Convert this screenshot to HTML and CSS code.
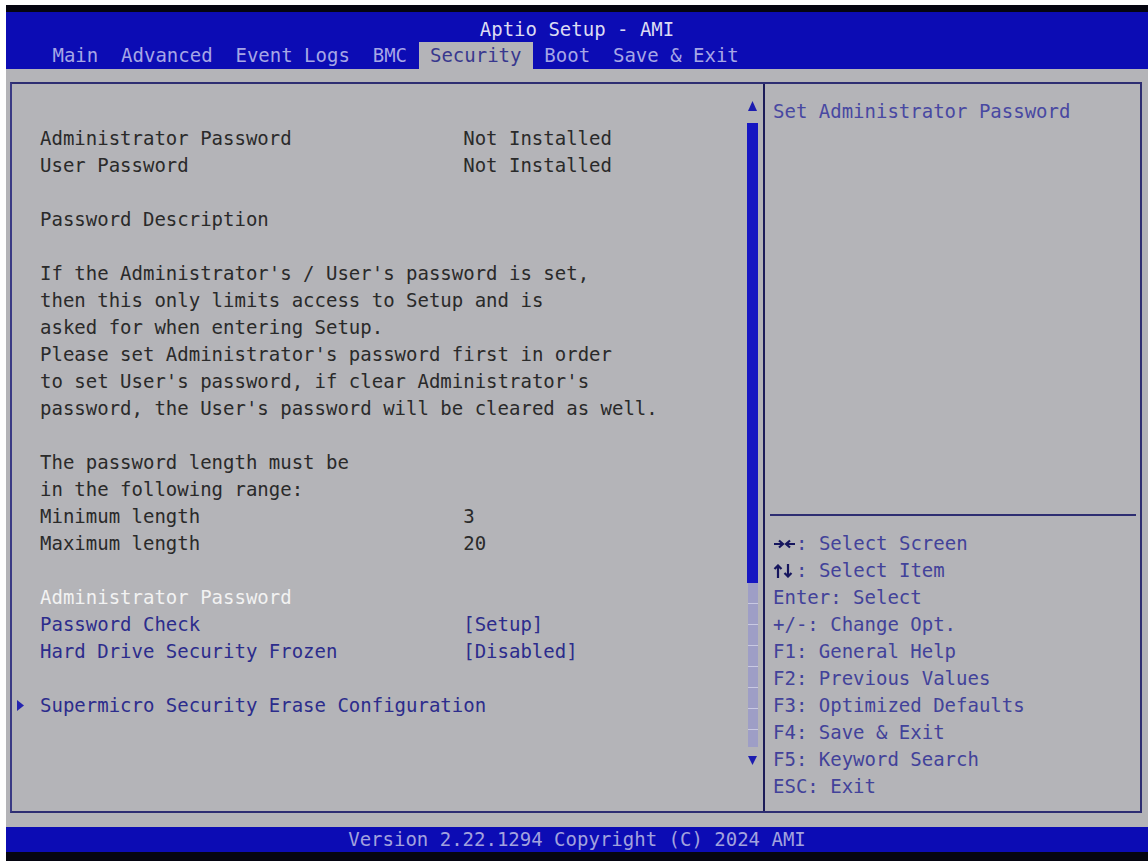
FILE: index.html
```html
<!DOCTYPE html>
<html lang="en">
<head>
    <meta charset="UTF-8">
    <meta name="viewport" content="width=device-width, initial-scale=1.0">
    <title>Aptio Setup - AMI</title>
    <link rel="stylesheet" href="styles.css">
</head>
<body>
    <div class="screen">
        <div class="bezel"></div>

        <header class="titlebar">
            <div class="title">Aptio Setup - AMI</div>
            <nav class="tabs">
                <span class="tab">Main</span>
                <span class="tab">Advanced</span>
                <span class="tab">Event Logs</span>
                <span class="tab">BMC</span>
                <span class="tab active">Security</span>
                <span class="tab">Boot</span>
                <span class="tab">Save &amp; Exit</span>
            </nav>
        </header>

        <main class="workspace">
            <div class="frame">
                <section class="setup-pane">
                    <div class="items">
                        <div class="row">&nbsp;</div>
                        <div class="row field"><span>Administrator Password</span><span>Not Installed</span></div>
                        <div class="row field"><span>User Password</span><span>Not Installed</span></div>
                        <div class="row">&nbsp;</div>
                        <div class="row">Password Description</div>
                        <div class="row">&nbsp;</div>
                        <div class="row">If the Administrator's / User's password is set,</div>
                        <div class="row">then this only limits access to Setup and is</div>
                        <div class="row">asked for when entering Setup.</div>
                        <div class="row">Please set Administrator's password first in order</div>
                        <div class="row">to set User's password, if clear Administrator's</div>
                        <div class="row">password, the User's password will be cleared as well.</div>
                        <div class="row">&nbsp;</div>
                        <div class="row">The password length must be</div>
                        <div class="row">in the following range:</div>
                        <div class="row field"><span>Minimum length</span><span>3</span></div>
                        <div class="row field"><span>Maximum length</span><span>20</span></div>
                        <div class="row">&nbsp;</div>
                        <div class="row option selected">Administrator Password</div>
                        <div class="row field option"><span>Password Check</span><span>[Setup]</span></div>
                        <div class="row field option"><span>Hard Drive Security Frozen</span><span>[Disabled]</span></div>
                        <div class="row">&nbsp;</div>
                        <div class="row option submenu"><svg class="pointer" width="7" height="11" viewBox="0 0 7 11"><path d="M0 0 L7 5.5 L0 11 Z" fill="#2424b0"/></svg>Supermicro Security Erase Configuration</div>
                    </div>

                    <div class="scrollbar">
                        <svg class="arrow" width="11" height="12" viewBox="0 0 11 12"><path d="M5.5 1 L10 11 L1 11 Z" fill="#1c1cb0"/></svg>
                        <div class="thumb"></div>
                        <div class="track"></div>
                        <svg class="arrow down" width="11" height="11" viewBox="0 0 11 11"><path d="M1 1 L10 1 L5.5 10 Z" fill="#1c1cb0"/></svg>
                    </div>
                </section>

                <aside class="help-pane">
                    <div class="help-text">Set Administrator Password</div>
                    <div class="divider"></div>
                    <ul class="keys">
                        <li><svg class="keyglyph" width="23" height="14" viewBox="0 0 23 14"><g fill="none" stroke="#16165e" stroke-width="2.2"><path d="M1 7 H10 M6 3.5 L10 7 L6 10.5"/><path d="M22 7 H13 M17 3.5 L13 7 L17 10.5"/></g></svg>: Select Screen</li>
                        <li><svg class="keyglyph" width="23" height="14" viewBox="0 0 23 14"><g fill="none" stroke="#16165e" stroke-width="2.2"><path d="M5 14 V1.5 M1.5 5 L5 1.5 L8.5 5"/><path d="M15 0 V12.5 M11.5 9 L15 12.5 L18.5 9"/></g></svg>: Select Item</li>
                        <li>Enter: Select</li>
                        <li>+/-: Change Opt.</li>
                        <li>F1: General Help</li>
                        <li>F2: Previous Values</li>
                        <li>F3: Optimized Defaults</li>
                        <li>F4: Save &amp; Exit</li>
                        <li>F5: Keyword Search</li>
                        <li>ESC: Exit</li>
                    </ul>
                </aside>
            </div>
        </main>

        <footer class="status">Version 2.22.1294 Copyright (C) 2024 AMI</footer>
        <div class="bezel bottom"></div>
    </div>
</body>
</html>
```

FILE: styles.css
```css
:root {
    --band: #0c0cb4;
    --panel: #b4b4b8;
    --line: #2e2e72;
    --ink: #2a2a2a;
    --item: #2c2c8c;
    --help: #42429a;
}

* {
    box-sizing: border-box;
}

body {
    margin: 0;
    background: #fff;
    font-family: "DejaVu Sans Mono", "Liberation Mono", monospace;
    font-size: 19px;
}

.screen {
    height: 856px;
    margin: 5px 0 4px 6px;
    display: flex;
    flex-direction: column;
    background: var(--panel);
}

.bezel {
    height: 7px;
    background: #050510;
}

.bezel.bottom {
    height: 9px;
}

/* Title and menu tabs */
.titlebar {
    background: var(--band);
    padding-top: 5px;
}

.title {
    text-align: center;
    line-height: 25px;
    color: #dcdcf2;
}

.tabs {
    display: flex;
    padding-left: 35px;
    line-height: 27px;
}

.tab {
    padding: 0 1ch;
    white-space: pre;
    color: #a6a6e6;
}

.tab.active {
    background: var(--panel);
    color: #38388e;
}

/* Main area */
.workspace {
    flex: 1;
    padding: 13px 6px 14px 4px;
    display: flex;
}

.frame {
    flex: 1;
    display: flex;
    border: 2px solid var(--line);
    border-left-color: #3a3a84;
}

.setup-pane {
    width: 753px;
    display: flex;
    border-right: 2px solid #1c1c58;
}

.items {
    flex: 1;
    padding: 14px 0 0 28px;
    color: var(--ink);
}

.row {
    height: 27px;
    line-height: 27px;
    white-space: pre;
}

.field {
    display: grid;
    grid-template-columns: 37ch auto;
}

.option {
    color: var(--item);
}

.option.selected {
    color: #f2f2f2;
}

.submenu {
    position: relative;
}

/* the triangle sits in the left margin, ahead of the text */
.pointer {
    position: absolute;
    left: -23px;
    top: 8px;
}

/* Scroll indicator */
.scrollbar {
    width: 11px;
    margin: 16px 5px 0 0;
    display: flex;
    flex-direction: column;
    align-items: center;
}

.arrow {
    display: block;
}

.thumb {
    width: 11px;
    height: 460px;
    margin-top: 11px;
    background: #1616c2;
}

.track {
    width: 10px;
    height: 164px;
    background-color: #9e9ec6;
    background-image: repeating-linear-gradient(to bottom, transparent 0 20px, rgba(230, 230, 245, 0.6) 20px 21px);
}

.arrow.down {
    margin-top: 8px;
}

/* Help column */
.help-pane {
    flex: 1;
    display: flex;
    flex-direction: column;
    color: var(--help);
}

.help-text {
    flex: 1;
    padding: 14px 0 0 8px;
    line-height: 27px;
    color: #4848a2;
}

.divider {
    height: 2px;
    margin: 0 4px 0 5px;
    background: var(--line);
}

.keys {
    list-style: none;
    margin: 0;
    padding: 14px 0 11px 8px;
}

.keys li {
    height: 27px;
    line-height: 27px;
    white-space: pre;
}

.keyglyph {
    vertical-align: -1px;
}

.status {
    background: var(--band);
    height: 25px;
    line-height: 25px;
    text-align: center;
    color: #a2a2de;
}
```
